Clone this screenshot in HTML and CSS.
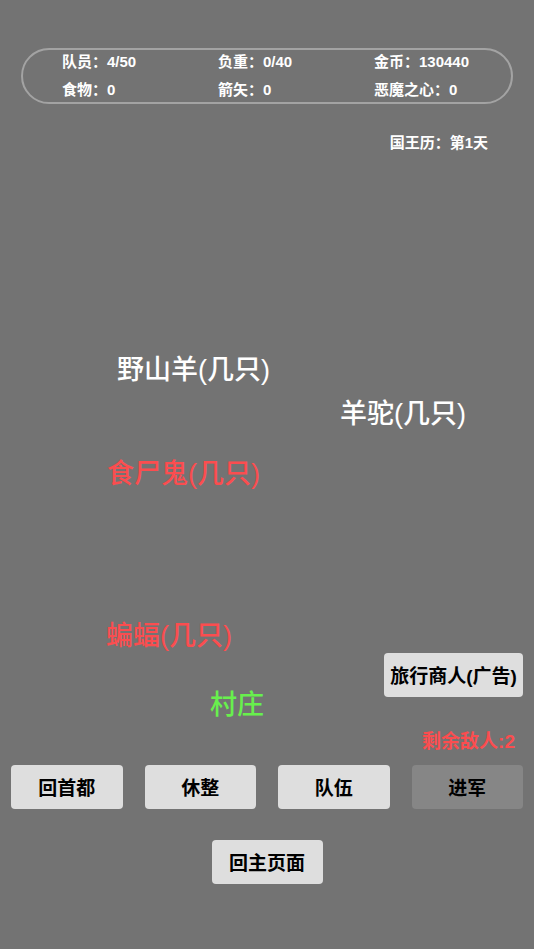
FILE: index.html
```html
<!DOCTYPE html>
<html lang="zh">

<head>
    <meta name="viewport" content="width=device-width, initial-scale=1">
    <link rel="stylesheet" href="styles.css">
</head>

<body>

    <!-- Party stats -->
    <div class="stats">
        <span>队员：4/50</span>
        <span>负重：0/40</span>
        <span>金币：130440</span>
        <span>食物：0</span>
        <span>箭矢：0</span>
        <span>恶魔之心：0</span>
    </div>

    <div class="date">国王历：第1天</div>

    <!-- Map area, labels sit on a free canvas -->
    <div class="map">
        <div class="spot spot-goat">野山羊(几只)</div>
        <div class="spot spot-alpaca">羊驼(几只)</div>
        <div class="spot enemy spot-ghoul">食尸鬼(几只)</div>
        <div class="spot enemy spot-bat">蝙蝠(几只)</div>
        <div class="spot village spot-village">村庄</div>

        <button class="btn merchant">旅行商人(广告)</button>
        <div class="enemy-count">剩余敌人:2</div>
    </div>

    <!-- Actions -->
    <div class="actions">
        <button class="btn">回首都</button>
        <button class="btn">休整</button>
        <button class="btn">队伍</button>
        <button class="btn disabled">进军</button>
    </div>

    <div class="home-row">
        <button class="btn home">回主页面</button>
    </div>

</body>

</html>
```

FILE: styles.css
```css
* {
    box-sizing: border-box;
}

body {
    margin: 0;
    height: 949px;
    background-color: #737373;
    font-family: "Liberation Sans", "Noto Sans CJK SC", sans-serif;
    color: white;
}

/* Stats box at the top */
.stats {
    margin: 48px 21px 0;
    height: 56px;
    border: 2px solid #a3a3a3;
    border-radius: 28px;
    padding: 0 0 0 39px;
    display: grid;
    grid-template-columns: 156px 156px 1fr;
    align-content: center;
    font-size: 15px;
    font-weight: bold;
    line-height: 28px;
}

.date {
    margin-top: 29px;
    padding-right: 46px;
    text-align: right;
    font-size: 15px;
    font-weight: bold;
    line-height: 20px;
}

/* Map */
.map {
    position: relative;
    height: 612px;
    display: flex;
    flex-direction: column;
    align-items: flex-end;
    justify-content: flex-end;
    padding-right: 11px;
}

.spot {
    position: absolute;
    font-size: 27px;
    font-weight: 500;
    line-height: 30px;
    white-space: nowrap;
}

.enemy {
    color: #fb4d4f;
}

.village {
    color: #68f04d;
}

.spot-goat { left: 117px; top: 202px; }
.spot-alpaca { left: 340px; top: 246px; }
.spot-ghoul { left: 107px; top: 306px; }
.spot-bat { left: 106px; top: 468px; }
.spot-village { left: 210px; top: 537px; }

/* Buttons */
.btn {
    height: 44px;
    border: none;
    border-radius: 4px;
    background-color: #dedede;
    color: black;
    font-family: inherit;
    font-size: 19px;
    font-weight: bold;
    padding: 0 4px 2px;
    cursor: pointer;
}

.merchant {
    width: 139px;
}

.enemy-count {
    margin-top: 33px;
    margin-right: 8px;
    color: #fb4d4f;
    font-size: 19px;
    font-weight: bold;
    line-height: 24px;
    margin-bottom: 11px;
}

.actions {
    display: flex;
    gap: 22px;
    padding: 0 11px;
}

.actions .btn {
    flex: 1;
}

.btn.disabled {
    background-color: #868686;
}

.home-row {
    display: flex;
    justify-content: center;
    margin-top: 31px;
}

.home {
    width: 111px;
}
```
